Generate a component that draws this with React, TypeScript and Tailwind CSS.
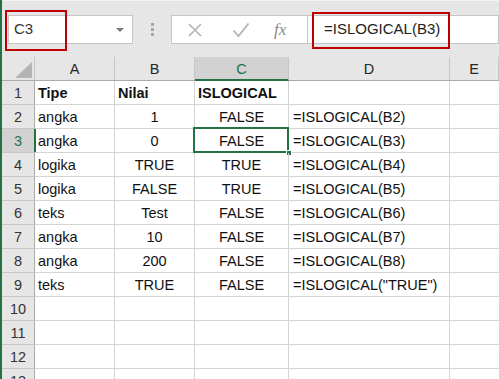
import React from 'react'

const cols = [
  { key: 'A', w: 'w-[80px]' },
  { key: 'B', w: 'w-[80px]' },
  { key: 'C', w: 'w-[94px]' },
  { key: 'D', w: 'w-[161px]' },
  { key: 'E', w: 'flex-1' },
]

// a = left, c = center
const rows: { cells: string[]; bold?: boolean }[] = [
  { cells: ['Tipe', 'Nilai', 'ISLOGICAL', ''], bold: true },
  { cells: ['angka', '1', 'FALSE', '=ISLOGICAL(B2)'] },
  { cells: ['angka', '0', 'FALSE', '=ISLOGICAL(B3)'] },
  { cells: ['logika', 'TRUE', 'TRUE', '=ISLOGICAL(B4)'] },
  { cells: ['logika', 'FALSE', 'TRUE', '=ISLOGICAL(B5)'] },
  { cells: ['teks', 'Test', 'FALSE', '=ISLOGICAL(B6)'] },
  { cells: ['angka', '10', 'FALSE', '=ISLOGICAL(B7)'] },
  { cells: ['angka', '200', 'FALSE', '=ISLOGICAL(B8)'] },
  { cells: ['teks', 'TRUE', 'FALSE', '=ISLOGICAL("TRUE")'] },
  { cells: ['', '', '', ''] },
  { cells: ['', '', '', ''] },
  { cells: ['', '', '', ''] },
  { cells: ['', '', '', ''] },
]

const App: React.FC = () => {
  return (
    <div className="relative w-[499px] h-[379px] overflow-hidden bg-white flex font-['Liberation_Sans',Arial,sans-serif] text-[14.5px] text-[#111]">
      <div className="w-[2px] shrink-0 bg-[#217346]" />
      <div className="flex-1 flex flex-col min-w-0">
        {/* formula bar */}
        <div className="h-[57px] shrink-0 bg-[#e6e6e6] border-t border-[#f4f4f4] flex items-start pt-[14px]">
          <div className="ml-[6px] w-[125px] h-[29px] bg-white border border-[#c6c6c6] flex items-center pl-[5px] pr-[8px]">
            <span className="text-[15px] text-[#333]">C3</span>
            <span className="ml-auto w-0 h-0 border-l-[4px] border-r-[4px] border-t-[4px] border-l-transparent border-r-transparent border-t-[#777]" />
          </div>
          <div className="ml-[18px] h-[29px] flex flex-col justify-center gap-[2px]">
            <span className="w-[3px] h-[3px] bg-[#a6a6a6]" />
            <span className="w-[3px] h-[3px] bg-[#a6a6a6]" />
            <span className="w-[3px] h-[3px] bg-[#a6a6a6]" />
          </div>
          <div className="ml-[17px] w-[137px] h-[29px] bg-white border border-[#c6c6c6] flex items-center">
            <svg className="ml-[15px]" width="16" height="16" viewBox="0 0 16 16">
              <path d="M2 2 L14 14 M14 2 L2 14" stroke="#b4b4b4" strokeWidth="1.6" fill="none" />
            </svg>
            <svg className="ml-[29px]" width="18" height="16" viewBox="0 0 18 16">
              <path d="M1.5 8.5 L6.5 14 L16.5 1.5" stroke="#b4b4b4" strokeWidth="1.8" fill="none" />
            </svg>
            <span className="ml-[24px] font-['Liberation_Serif',serif] italic text-[17px] text-[#8a8a8a]">fx</span>
          </div>
          <div className="flex-1 h-[29px] bg-white border-y border-r border-[#c6c6c6] flex items-center pl-[16px]">
            <span className="text-[15px] text-[#222]">=ISLOGICAL(B3)</span>
          </div>
        </div>

        {/* column headers */}
        <div className="h-[24px] shrink-0 flex bg-[#e6e6e6] border-b border-[#ababab]">
          <div className="w-[33px] shrink-0 border-r border-[#c6c6c6] relative">
            <span className="absolute right-[2px] bottom-[2px] w-0 h-0 border-l-[16px] border-t-[16px] border-l-transparent border-t-transparent border-b-0 border-r-0 border-[#b4b4b4]" style={{ borderBottomWidth: 0 }} />
            <svg className="absolute right-[2px] bottom-[2px]" width="17" height="16" viewBox="0 0 17 16">
              <path d="M17 0 L17 16 L0 16 Z" fill="#b4b4b4" />
            </svg>
          </div>
          {cols.map((c) => (
            <div
              key={c.key}
              className={`${c.w} shrink-0 border-r border-[#c6c6c6] flex items-center justify-center pt-[3px] ${
                c.key === 'C' ? 'bg-[#d2d2d2] text-[#217346] border-b-2 border-b-[#217346] -mb-[1px]' : 'text-[#262626]'
              }`}
            >
              {c.key}
            </div>
          ))}
        </div>

        {/* rows */}
        {rows.map((r, i) => {
          const n = i + 1
          const active = n === 3
          return (
            <div key={n} className="h-[24px] shrink-0 flex">
              <div
                className={`w-[33px] shrink-0 flex items-center justify-center pt-[3px] border-b border-[#c6c6c6] ${
                  active
                    ? 'bg-[#d2d2d2] text-[#217346] border-r-2 border-r-[#217346] w-[34px] -mr-[1px]'
                    : 'bg-[#e6e6e6] text-[#333] border-r border-r-[#ababab]'
                }`}
              >
                {n}
              </div>
              <div className={`w-[80px] shrink-0 border-r border-b border-[#d4d4d4] flex items-center pt-[3px] pl-[3px] ${r.bold ? 'font-bold' : ''}`}>
                {r.cells[0]}
              </div>
              <div
                className={`w-[80px] shrink-0 border-r border-b border-[#d4d4d4] flex items-center pt-[3px] ${
                  r.bold ? 'font-bold pl-[3px]' : 'justify-center'
                }`}
              >
                {r.cells[1]}
              </div>
              <div
                className={`relative w-[94px] shrink-0 border-r border-b border-[#d4d4d4] flex items-center pt-[3px] ${
                  r.bold ? 'font-bold pl-[3px]' : 'justify-center'
                }`}
              >
                {r.cells[2]}
                {active && (
                  <>
                    <span className="absolute -left-[2px] -top-[2px] w-[96px] h-[26px] border-2 border-[#217346]" />
                    <span className="absolute -right-[4px] -bottom-[4px] w-[6px] h-[6px] bg-[#217346] border border-white" />
                  </>
                )}
              </div>
              <div className="w-[161px] shrink-0 border-r border-b border-[#d4d4d4] flex items-center pt-[3px] pl-[4px] whitespace-nowrap">
                {r.cells[3]}
              </div>
              <div className="flex-1 border-b border-[#d4d4d4]" />
            </div>
          )
        })}
      </div>

      {/* red annotation boxes */}
      <div className="absolute left-[5px] top-[10px] w-[62px] h-[41px] border-2 border-[#c00000]" />
      <div className="absolute left-[312px] top-[12px] w-[138px] h-[37px] border-2 border-[#c00000]" />
    </div>
  )
}

export default App
